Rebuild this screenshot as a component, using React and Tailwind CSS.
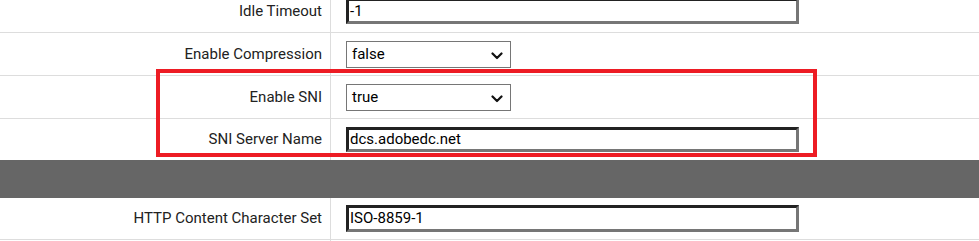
import React from "react";

const font = { fontFamily: "Roboto, 'Liberation Sans', sans-serif" };

function Chevron() {
  return (
    <svg width="12" height="8" viewBox="0 0 12 8" className="absolute right-[7px] top-[10px]">
      <path d="M1.5 1.5 L6 6 L10.5 1.5" fill="none" stroke="#111" strokeWidth="2.2" strokeLinecap="round" strokeLinejoin="round" />
    </svg>
  );
}

function TextInput({ value, h = "h-[26px]" }) {
  return (
    <div
      className={`w-[453px] ${h} border-[3px] border-t-[#222] border-l-[#222] border-b-[#767676] border-r-[#767676] bg-white flex items-center pl-[1px] text-[15px] text-black leading-none`}
    >
      {value}
    </div>
  );
}

function Select({ value }) {
  return (
    <div className="relative w-[165px] h-[27px] border border-[#767676] bg-white flex items-center pl-[5px] text-[15px] text-black leading-none">
      {value}
      <Chevron />
    </div>
  );
}

function Label({ children }) {
  return (
    <div className="w-[330px] shrink-0 flex items-center justify-end pr-[8px] text-[15px] text-[#222]">
      {children}
    </div>
  );
}

function Row({ label, children, h = "h-[43px]" }) {
  return (
    <div className={`flex ${h} border-b border-[#dddddd]`}>
      <Label>{label}</Label>
      <div className="border-l border-[#dddddd] flex items-center pl-[15px] grow">{children}</div>
    </div>
  );
}

export default function App() {
  return (
    <div className="relative w-[979px] h-[241px] overflow-hidden bg-white" style={font}>
      <div className="-mt-[10px]">
        <Row label="Idle Timeout">
          <TextInput value="-1" />
        </Row>
        <Row label="Enable Compression">
          <Select value="false" />
        </Row>
        <Row label="Enable SNI">
          <Select value="true" />
        </Row>
        <div className="flex h-[41px]">
          <Label>SNI Server Name</Label>
          <div className="border-l border-[#dddddd] flex items-center pl-[15px] grow">
            <TextInput value="dcs.adobedc.net" h="h-[25px]" />
          </div>
        </div>
        <div className="h-[38px] bg-[#666666]" />
        <Row label="HTTP Content Character Set" h="h-[42px]">
          <TextInput value="ISO-8859-1" h="h-[27px]" />
        </Row>
        <div className="flex h-[20px]">
          <div className="w-[330px] shrink-0" />
          <div className="border-l border-[#dddddd] grow" />
        </div>
      </div>
      <div className="absolute left-[156px] top-[69px] w-[661px] h-[88px] border-4 border-[#ed1c24] pointer-events-none" />
    </div>
  );
}
